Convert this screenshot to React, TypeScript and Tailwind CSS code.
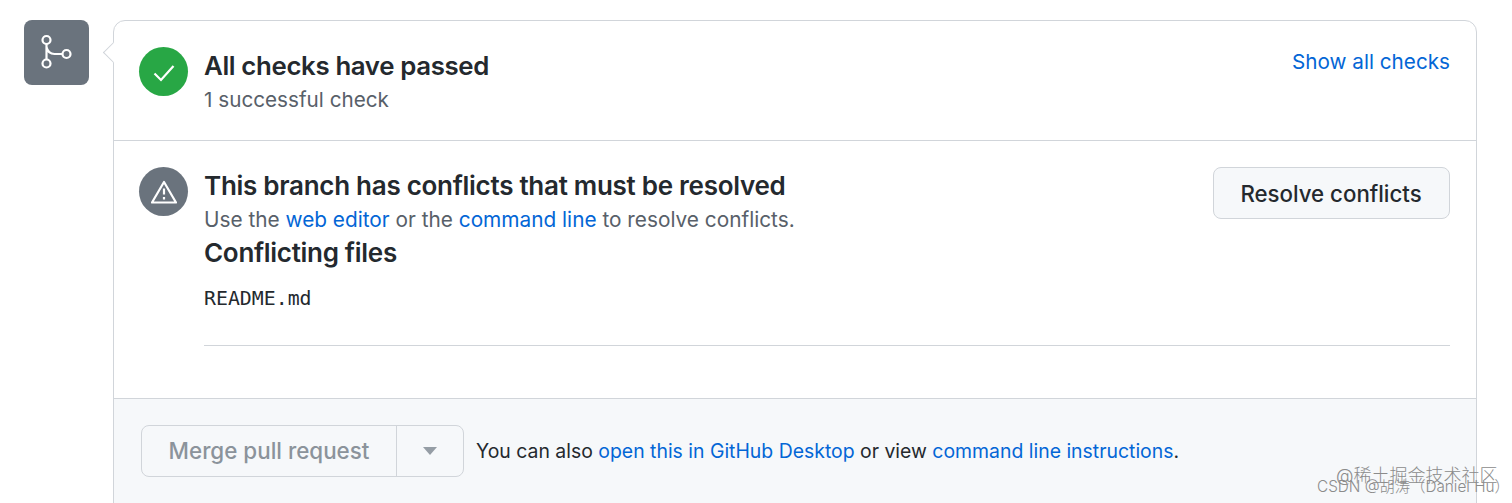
const App = () => {
  return (
    <div className="relative h-[503px] w-[1512px] overflow-hidden bg-white pt-5 pl-6 font-['Inter','Noto_Sans_CJK_SC',sans-serif]">
      <div className="flex items-start gap-6">
        <div className="flex h-[65px] w-[65px] shrink-0 items-center justify-center rounded-lg bg-[#6a737d]">
          <svg width="36" height="38" viewBox="0 0 36 38" fill="none" stroke="white" strokeWidth="2.2">
            <circle cx="7.5" cy="6" r="4" />
            <circle cx="7.5" cy="29.5" r="4" />
            <circle cx="27.5" cy="20" r="4" />
            <path d="M7.5 10V25.5M7.5 13C8.5 17.5 11.5 20 15.5 20H23.5" />
          </svg>
        </div>

        <div className="relative h-[600px] w-[1364px] rounded-xl border border-[#d1d5da]">
          <div className="absolute top-[23.5px] -left-[8.5px] h-[15px] w-[15px] rotate-45 border-b border-l border-[#d1d5da] bg-white" />

          <div className="flex h-[120px] justify-between border-b border-[#d1d5da] pt-[26px] pr-[26px] pl-[25px]">
            <div className="flex gap-4">
              <div className="flex h-[49px] w-[49px] items-center justify-center rounded-full bg-[#28a745]">
                <svg width="24" height="24" viewBox="0 0 24 24" fill="none" stroke="white" strokeWidth="2.2">
                  <path d="M2.5 13.5L9 20L21.5 6" />
                </svg>
              </div>
              <div>
                <div className="text-[25.8px] leading-[38px] font-semibold tracking-[-0.35px] text-[#24292e]">All checks have passed</div>
                <div className="-mt-px text-[20.7px] leading-[32px] text-[#586069]">1 successful check</div>
              </div>
            </div>
            <a className="-mt-px text-[20.7px] leading-[32px] text-[#0366d6]">Show all checks</a>
          </div>

          <div className="flex h-[258px] justify-between border-b border-[#d1d5da] pt-[26px] pr-[26px] pl-[25px]">
            <div className="flex w-full gap-4">
              <div className="flex h-[49px] w-[49px] shrink-0 items-center justify-center rounded-full bg-[#6a737d]">
                <svg width="26" height="24" viewBox="0 0 26 24" fill="none" stroke="white" strokeWidth="2.2" strokeLinejoin="round">
                  <path d="M13 2L25 22.5H1Z" />
                  <path d="M13 8.5V14.5M13 17V19.5" />
                </svg>
              </div>
              <div className="w-full">
                <div className="flex justify-between">
                  <div>
                    <div className="text-[26px] leading-[38px] font-semibold tracking-[-0.28px] text-[#24292e]">This branch has conflicts that must be resolved</div>
                    <div className="-mt-px text-[20.8px] leading-[32px] text-[#586069]">
                      Use the <a className="text-[#0366d6]">web editor</a> or the <a className="text-[#0366d6]">command line</a> to resolve conflicts.
                    </div>
                    <div className="text-[26px] leading-[34px] font-semibold tracking-[-0.3px] text-[#24292e]">Conflicting files</div>
                  </div>
                  <button className="h-[52px] w-[237px] rounded-lg border border-[#d1d5da] bg-[#f6f8fa] pt-px pr-px text-[22.25px] font-medium text-[#24292e]">Resolve conflicts</button>
                </div>
                <div className="mt-[15px] font-['DejaVu_Sans_Mono',monospace] text-[19.85px] leading-[28px] text-[#24292e]">README.md</div>
                <div className="mt-[32px] border-t border-[#d1d5da]" />
              </div>
            </div>
          </div>

          <div className="flex h-[220px] items-start gap-3 bg-[#f6f8fa] pt-[26px] pl-[27px]">
            <div className="flex h-[52px] w-[323px] overflow-hidden rounded-lg border border-[#d1d5da] text-[#8b939b]">
              <div className="flex w-[255px] items-center justify-center border-r border-[#d1d5da] text-[22.4px] font-medium">Merge pull request</div>
              <div className="flex flex-1 items-center justify-center">
                <svg width="14" height="8" viewBox="0 0 14 8" fill="#959da5"><path d="M0 0H14L7 8Z" /></svg>
              </div>
            </div>
            <div className="pt-[10px] text-[19.42px] leading-[32px] text-[#24292e]">
              You can also <a className="text-[#0366d6]">open this in GitHub Desktop</a> or view <a className="text-[#0366d6]">command line instructions</a>.
            </div>
          </div>
        </div>
      </div>

      <div className="absolute top-[466px] left-[1336px] text-[18px] leading-5 font-light whitespace-nowrap text-[#8b8b8b]">@稀土掘金技术社区</div>
      <div className="absolute top-[477px] left-[1317px] text-[15.3px] leading-5 font-light whitespace-nowrap text-[#8b8b8b]">CSDN @胡涛（Daniel Hu）</div>
    </div>
  );
};

export default App;
